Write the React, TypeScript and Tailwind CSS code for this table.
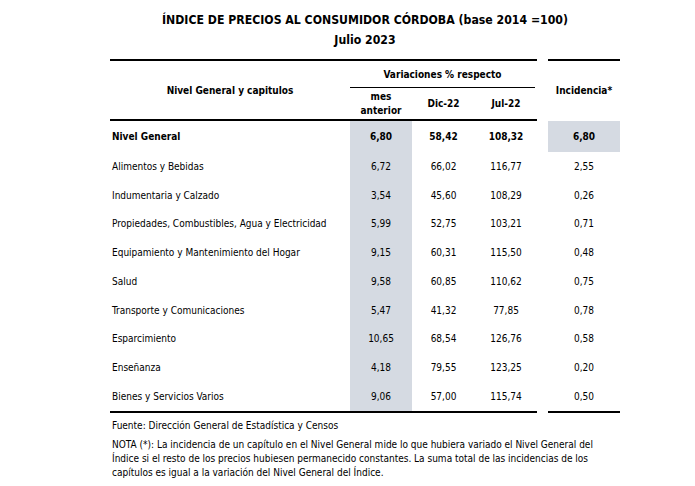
import React from "react";

const rows: [string, string, string, string, string][] = [
  ["Alimentos y Bebidas", "6,72", "66,02", "116,77", "2,55"],
  ["Indumentaria y Calzado", "3,54", "45,60", "108,29", "0,26"],
  ["Propiedades, Combustibles, Agua y Electricidad", "5,99", "52,75", "103,21", "0,71"],
  ["Equipamiento y Mantenimiento del Hogar", "9,15", "60,31", "115,50", "0,48"],
  ["Salud", "9,58", "60,85", "110,62", "0,75"],
  ["Transporte y Comunicaciones", "5,47", "41,32", "77,85", "0,78"],
  ["Esparcimiento", "10,65", "68,54", "126,76", "0,58"],
  ["Enseñanza", "4,18", "79,55", "123,25", "0,20"],
  ["Bienes y Servicios Varios", "9,06", "57,00", "115,74", "0,50"],
];

export default function App() {
  return (
    <div
      className="w-[695px] h-[486px] bg-white text-black overflow-hidden"
      style={{ fontFamily: '"DejaVu Sans Condensed", "DejaVu Sans", sans-serif' }}
    >
      <div className="pl-[110px] w-[620px] pt-[10px] flex flex-col items-center font-bold text-[12.2px] leading-[20px]">
        <div>ÍNDICE DE PRECIOS AL CONSUMIDOR CÓRDOBA (base 2014 =100)</div>
        <div>Julio 2023</div>
      </div>

      <div className="ml-[110px] mt-[9px] w-[510px] text-[10px]">
        {/* header */}
        <div className="flex">
          <div className="w-[427px] border-t-2 border-b-2 border-black flex h-[62px]">
            <div className="w-[240px] flex items-center justify-center font-bold">
              Nivel General y capitulos
            </div>
            <div className="w-[187px] flex flex-col">
              <div className="h-[27px] flex items-center justify-center font-bold border-b border-black w-[185px]">
                Variaciones % respecto
              </div>
              <div className="flex flex-1 font-bold">
                <div className="w-[62px] flex flex-col items-center justify-center leading-[14px]">
                  <span>mes</span>
                  <span>anterior</span>
                </div>
                <div className="w-[63px] flex items-center justify-center">Dic-22</div>
                <div className="w-[62px] flex items-center justify-center">Jul-22</div>
              </div>
            </div>
          </div>
          <div className="ml-[11px] w-[72px] border-t-2 border-black h-[62px] flex items-center justify-center font-bold pb-[2px]">
            Incidencia*
          </div>
        </div>

        {/* body */}
        <div className="flex">
          <div className="w-[427px] border-b-2 border-black">
            <div className="flex h-[31px] items-center font-bold">
              <div className="w-[240px] pl-[2px]">Nivel General</div>
              <div className="w-[62px] h-full bg-[#d5dae2] flex items-center justify-center">6,80</div>
              <div className="w-[63px] text-center">58,42</div>
              <div className="w-[62px] text-center">108,32</div>
            </div>
            {rows.map((r) => (
              <div key={r[0]} className="flex h-[28.75px] items-center">
                <div className="w-[240px] pl-[2px]">{r[0]}</div>
                <div className="w-[62px] h-full bg-[#d5dae2] flex items-center justify-center">{r[1]}</div>
                <div className="w-[63px] text-center">{r[2]}</div>
                <div className="w-[62px] text-center">{r[3]}</div>
              </div>
            ))}
          </div>
          <div className="ml-[11px] w-[72px] border-b-2 border-black">
            <div className="h-[31px] bg-[#d5dae2] flex items-center justify-center font-bold">6,80</div>
            {rows.map((r) => (
              <div key={r[0]} className="h-[28.75px] flex items-center justify-center">
                {r[4]}
              </div>
            ))}
          </div>
        </div>

        <div className="mt-[6px] pl-[2px] leading-[14px]">Fuente: Dirección General de Estadística y Censos</div>
        <div className="mt-[5px] pl-[2px] leading-[14px] w-[500px]">
          NOTA (*): La incidencia de un capítulo en el Nivel General mide lo que hubiera variado el Nivel General del Índice si el resto de los precios hubiesen permanecido constantes. La suma total de las incidencias de los capítulos es igual a la variación del Nivel General del Índice.
        </div>
      </div>
    </div>
  );
}
